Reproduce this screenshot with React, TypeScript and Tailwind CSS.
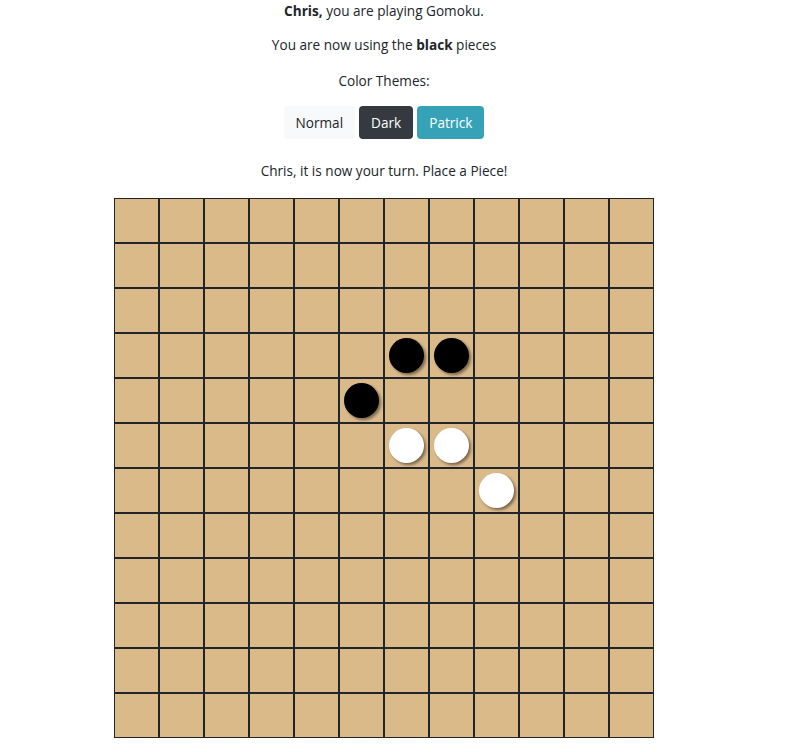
const SIZE = 12;

const pieces: Record<string, "black" | "white"> = {
  "3-6": "black",
  "3-7": "black",
  "4-5": "black",
  "5-6": "white",
  "5-7": "white",
  "6-8": "white",
};

function Cell({ row, col }: { row: number; col: number }) {
  const piece = pieces[`${row}-${col}`];
  return (
    <div className="w-[45px] h-[45px] border border-[#212529] bg-[#dbba8a] flex items-center justify-center">
      {piece === "black" && (
        <div className="w-[35px] h-[35px] rounded-full bg-black shadow-[2px_2px_3px_rgba(0,0,0,0.45)]" />
      )}
      {piece === "white" && (
        <div className="w-[35px] h-[35px] rounded-full bg-white shadow-[2px_2px_3px_rgba(0,0,0,0.45)]" />
      )}
    </div>
  );
}

export default function App() {
  const rows = Array.from({ length: SIZE }, (_, i) => i);

  return (
    <div
      className="w-[768px] text-center text-[13.6px] leading-[21px] text-[#212529]"
      style={{ fontFamily: '"Open Sans", "Noto Sans", sans-serif' }}
    >
      <p className="mb-[13px]">
        <b>Chris,</b> you are playing Gomoku.
      </p>
      <p className="mb-[15px]">
        You are now using the <b>black</b> pieces
      </p>
      <p className="mb-[15px]">Color Themes:</p>
      <div className="flex justify-center gap-[4px]">
        <button className="h-[33px] px-[12px] rounded-[4px] bg-[#f8f9fa] text-[#212529]">
          Normal
        </button>
        <button className="h-[33px] px-[12px] rounded-[4px] bg-[#343a40] text-white">
          Dark
        </button>
        <button className="h-[33px] px-[12px] rounded-[4px] bg-[#36a2b8] text-white">
          Patrick
        </button>
      </div>
      <p className="mt-[21px] mb-[17px]">Chris, it is now your turn. Place a Piece!</p>
      <div className="flex justify-center">
        <div className="grid grid-cols-[repeat(12,45px)]">
          {rows.map((r) =>
            rows.map((c) => <Cell key={`${r}-${c}`} row={r} col={c} />)
          )}
        </div>
      </div>
    </div>
  );
}
